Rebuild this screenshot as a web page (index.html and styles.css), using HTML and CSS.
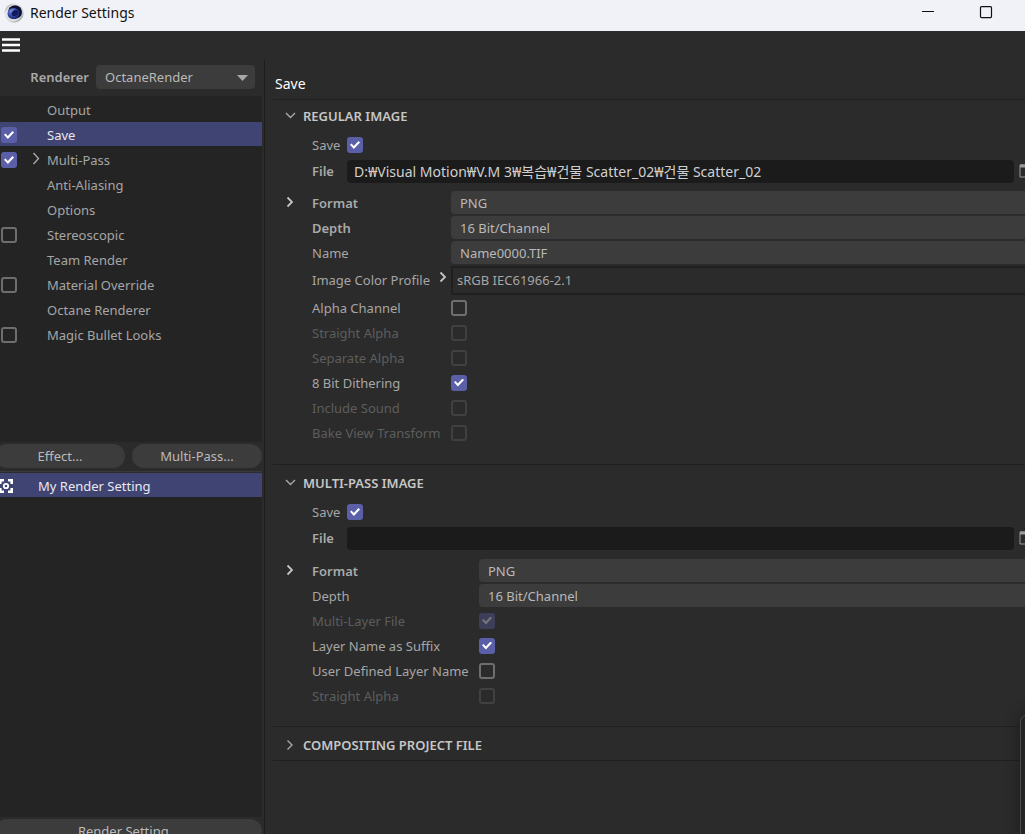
FILE: index.html
```html
<!DOCTYPE html>
<html lang="en">
<head>
<meta charset="utf-8">
<title>Render Settings</title>
<link rel="stylesheet" href="styles.css">
</head>
<body>
<div class="window">
  <header class="titlebar">
    <svg class="logo" width="20" height="20" viewBox="0 0 20 20" aria-hidden="true">
      <defs>
        <linearGradient id="rim" x1="0" y1="0" x2="1" y2="1"><stop offset="0" stop-color="#8b8c92"/><stop offset="0.3" stop-color="#e9e9ec"/><stop offset="0.7" stop-color="#c9cace"/><stop offset="1" stop-color="#85868c"/></linearGradient>
        <radialGradient id="ball" cx="0.35" cy="0.3" r="0.8"><stop offset="0" stop-color="#8095e0"/><stop offset="0.5" stop-color="#3448a8"/><stop offset="1" stop-color="#141c58"/></radialGradient>
      </defs>
      <circle cx="10" cy="10" r="9.7" fill="url(#rim)"/>
      <ellipse cx="11" cy="9" rx="7" ry="6.800" fill="#0c1030"/>
      <ellipse cx="9.500" cy="10.500" rx="6" ry="5.600" fill="url(#ball)"/>
      <path d="M7.500 10c1-2.500 4-3.500 6-2.500 1.500 2 .5 4.500-2 5.500-2.500.5-4.300-.8-4-3z" fill="#111a5c"/>
      <path d="M3 14c3 3.500 9 4 13 .5-2 4-10 5-13-.5z" fill="#f2f2f4"/>
    </svg>
    <h1 class="window-title">Render Settings</h1>
    <div class="window-controls">
      <button class="window-button" type="button" aria-label="Minimize"><svg width="14" height="14" viewBox="0 0 14 14"><path d="M1 5.500h12" stroke="#111" fill="none"/></svg></button>
      <button class="window-button" type="button" aria-label="Maximize"><svg width="14" height="14" viewBox="0 0 14 14"><rect x="1.500" y="0.600" width="11" height="11" rx="1" stroke="#111" stroke-width="1.200" fill="none"/></svg></button>
    </div>
  </header>
  <nav class="menubar">
    <button class="menu-button" type="button" aria-label="Menu"><svg width="19" height="14" viewBox="0 0 19 14"><path d="M1 1.500h18M1 7h18M1 12.500h18" stroke="#fff" stroke-width="2.600"/></svg></button>
  </nav>
  <div class="body">
    <aside class="sidebar">
      <div class="renderer">
        <label class="strong" for="renderer">Renderer</label>
        <span class="renderer-box">
          <select class="select renderer-select" id="renderer"><option>OctaneRender</option></select>
          <svg class="arrow" width="11" height="6" viewBox="0 0 11 6"><path d="M0 0h11L5.500 6z" fill="#a8a8a8"/></svg>
        </span>
      </div>
      <ul class="tree">
        <li class="tree-row"><span class="tree-label">Output</span></li>
        <li class="tree-row selected"><input class="check" type="checkbox" id="t-save" checked><label class="tree-label" for="t-save">Save</label></li>
        <li class="tree-row"><input class="check" type="checkbox" id="t-multi" checked><svg class="tree-chevron" width="9" height="13" viewBox="0 0 9 13"><path d="M1.500 1l5 5.500-5 5.500" class="stroke"/></svg><label class="tree-label" for="t-multi">Multi-Pass</label></li>
        <li class="tree-row"><span class="tree-label">Anti-Aliasing</span></li>
        <li class="tree-row"><span class="tree-label">Options</span></li>
        <li class="tree-row"><input class="check" type="checkbox" id="t-stereo"><label class="tree-label" for="t-stereo">Stereoscopic</label></li>
        <li class="tree-row"><span class="tree-label">Team Render</span></li>
        <li class="tree-row"><input class="check" type="checkbox" id="t-material"><label class="tree-label" for="t-material">Material Override</label></li>
        <li class="tree-row"><span class="tree-label">Octane Renderer</span></li>
        <li class="tree-row"><input class="check" type="checkbox" id="t-magic"><label class="tree-label" for="t-magic">Magic Bullet Looks</label></li>
      </ul>
      <div class="actions">
        <button class="pill pill-effect" type="button">Effect...</button>
        <button class="pill pill-multi" type="button">Multi-Pass...</button>
      </div>
      <ul class="presets">
        <li class="preset">
          <svg width="14" height="14" viewBox="0 0 14 14" aria-hidden="true"><path d="M1.300 5V1.300H5M9 1.300h3.700V5M12.700 9v3.700H9M5 12.700H1.300V9" stroke="#fff" stroke-width="2.600" fill="none"/><circle cx="7" cy="7" r="2.200" stroke="#fff" stroke-width="1.800" fill="none"/></svg>
          <span>My Render Setting</span>
        </li>
      </ul>
      <button class="pill pill-bottom" type="button">Render Setting...</button>
    </aside>
    <main class="main">
      <h2 class="page-title">Save</h2>
      <section class="section regular">
        <h3 class="section-title"><svg width="11" height="7" viewBox="0 0 11 7"><path d="M1 1l4.500 4.500L10 1" class="stroke"/></svg>REGULAR IMAGE</h3>
        <div class="line save-line"><label for="r-save">Save</label><input class="check" type="checkbox" id="r-save" checked></div>
        <div class="line file-line">
          <label class="strong" for="r-file">File</label>
          <input class="file" type="text" id="r-file" value="D:₩Visual Motion₩V.M 3₩복습₩건물 Scatter_02₩건물 Scatter_02">
          <button class="browse" type="button" aria-label="Browse"><svg width="16" height="14" viewBox="0 0 16 14"><path d="M1 1h14v12H1z" class="folder"/><path d="M1 2h14" class="folder folder-top"/></svg></button>
        </div>
        <div class="fields">
          <div class="field"><svg class="chevron" width="8" height="12" viewBox="0 0 8 12"><path d="M1.500 1.500L6 6l-4.500 4.500" class="stroke bright"/></svg><label class="strong" for="r-format">Format</label><select class="select" id="r-format"><option>PNG</option></select></div>
          <div class="field"><label class="strong" for="r-depth">Depth</label><select class="select" id="r-depth"><option>16 Bit/Channel</option></select></div>
          <div class="field"><label for="r-name">Name</label><select class="select" id="r-name"><option>Name0000.TIF</option></select></div>
          <div class="field profile"><label for="r-profile">Image Color Profile</label><svg class="profile-chevron" width="8" height="12" viewBox="0 0 8 12"><path d="M1.500 1.500L6 6l-4.500 4.500" class="stroke bright"/></svg><input class="profile-box" type="text" id="r-profile" value="sRGB IEC61966-2.1" readonly></div>
          <div class="field"><label for="r-alpha">Alpha Channel</label><input class="check" type="checkbox" id="r-alpha"></div>
          <div class="field off"><label for="r-straight">Straight Alpha</label><input class="check" type="checkbox" id="r-straight" disabled></div>
          <div class="field off"><label for="r-separate">Separate Alpha</label><input class="check" type="checkbox" id="r-separate" disabled></div>
          <div class="field"><label for="r-dither">8 Bit Dithering</label><input class="check" type="checkbox" id="r-dither" checked></div>
          <div class="field off"><label for="r-sound">Include Sound</label><input class="check" type="checkbox" id="r-sound" disabled></div>
          <div class="field off"><label for="r-bake">Bake View Transform</label><input class="check" type="checkbox" id="r-bake" disabled></div>
        </div>
      </section>
      <section class="section multipass">
        <h3 class="section-title"><svg width="11" height="7" viewBox="0 0 11 7"><path d="M1 1l4.500 4.500L10 1" class="stroke"/></svg>MULTI-PASS IMAGE</h3>
        <div class="line save-line"><label for="m-save">Save</label><input class="check" type="checkbox" id="m-save" checked></div>
        <div class="line file-line">
          <label class="strong" for="m-file">File</label>
          <input class="file" type="text" id="m-file">
          <button class="browse" type="button" aria-label="Browse"><svg width="16" height="14" viewBox="0 0 16 14"><path d="M1 1h14v12H1z" class="folder"/><path d="M1 2h14" class="folder folder-top"/></svg></button>
        </div>
        <div class="fields fields-wide">
          <div class="field"><svg class="chevron" width="8" height="12" viewBox="0 0 8 12"><path d="M1.500 1.500L6 6l-4.500 4.500" class="stroke bright"/></svg><label class="strong" for="m-format">Format</label><select class="select" id="m-format"><option>PNG</option></select></div>
          <div class="field"><label for="m-depth">Depth</label><select class="select" id="m-depth"><option>16 Bit/Channel</option></select></div>
          <div class="field off"><label for="m-layer">Multi-Layer File</label><input class="check" type="checkbox" id="m-layer" checked disabled></div>
          <div class="field"><label for="m-suffix">Layer Name as Suffix</label><input class="check" type="checkbox" id="m-suffix" checked></div>
          <div class="field"><label for="m-user">User Defined Layer Name</label><input class="check" type="checkbox" id="m-user"></div>
          <div class="field off"><label for="m-straight">Straight Alpha</label><input class="check" type="checkbox" id="m-straight" disabled></div>
        </div>
      </section>
      <section class="section compositing">
        <h3 class="section-title"><svg width="11" height="12" viewBox="0 0 11 12"><path d="M2.500 1.500L7 6l-4.500 4.500" class="stroke"/></svg>COMPOSITING PROJECT FILE</h3>
      </section>
    </main>
  </div>
  <div class="side-window"></div>
</div>
</body>
</html>
```
FILE: styles.css
```css
* { box-sizing: border-box; }

body {
  margin: 0;
  overflow: hidden;
  background: #2b2b2b;
  color: #a6a6a6;
  font: 13px/20px "Noto Sans", "Noto Sans CJK KR", sans-serif;
}

h1, h2, h3, ul { margin: 0; padding: 0; list-style: none; font-weight: 400; }
button, input, select { margin: 0; font: inherit; color: inherit; }
svg { display: block; flex: none; }

.window { display: flex; flex-direction: column; height: calc(100vh + 9px); }

.titlebar { display: flex; align-items: center; flex: none; height: 31px; padding: 0 10px 6px 4px; background: #f0f2f8; color: #111; }
.window-title { margin-left: 6px; font-size: 14px; }
.window-controls { display: flex; gap: 30px; margin-left: auto; padding-right: 15px; }
.window-button { width: 28px; height: 20px; padding: 0; border: 0; background: none; display: grid; place-items: center; }

.menubar { flex: none; height: 29px; padding: 7px 1px; }
.menu-button { display: block; padding: 0; border: 0; background: none; }

.body { display: flex; flex: 1; min-height: 0; }

.sidebar { display: flex; flex-direction: column; flex: none; width: 265px; padding-right: 2px; border-right: 1px solid #1d1d1d; }
.renderer { display: flex; align-items: center; justify-content: flex-end; gap: 7px; height: 36px; padding: 0 7px 2px 0; }
.renderer-box { position: relative; width: 159px; }
.arrow { position: absolute; right: 7px; top: 10px; pointer-events: none; }

.strong { font-weight: 600; color: #a9a9a9; }

.select {
  display: block;
  width: 100%;
  height: 23px;
  padding: 0 9px;
  border: 0;
  border-radius: 4px;
  background: #3c3c3c;
  color: #b9b9b9;
  appearance: none;
}
.renderer-select { height: 24px; }

.tree { height: 346px; padding-top: 1px; background: #242424; }
.tree-row, .preset { display: flex; align-items: center; height: 25px; padding-top: 1px; background-clip: padding-box; border-bottom: 1px solid transparent; }
.tree-row { position: relative; padding-left: 47px; }
.tree-row .check { position: absolute; left: 1px; top: 5px; }
.tree-chevron { position: absolute; left: 32px; top: 5px; }
.selected, .preset { background-color: #404473; color: #e8e8ee; }

.check {
  flex: none;
  display: grid;
  place-items: center;
  width: 16px;
  height: 16px;
  border: 2px solid #6e6e6e;
  border-radius: 3px;
  background: transparent;
  appearance: none;
}
.check:checked { border: 0; background: #5b5fa8; }
.check:checked::before { content: ""; width: 10px; height: 8px; background: #fff; clip-path: polygon(0 48%, 15% 30%, 38% 62%, 85% 0, 100% 18%, 39% 100%); }
.check:disabled { border-color: #404040; }
.check:disabled:checked { background: #3d3e58; }
.check:disabled:checked::before { background: #77777d; }

.actions { display: flex; gap: 7px; height: 30px; padding: 2px 0 3px; border-bottom: 1px solid #393939; }
.pill { height: 24px; padding: 0; border: 0; border-radius: 12px; background: #3c3c3c; color: #bababa; }
.pill-effect { flex: 1; margin-left: -5px; }
.pill-multi { flex: 1; }
.pill-bottom { flex: none; margin: 2px 0 0 -5px; }

.presets { flex: 1; margin-top: 1px; background: #242424; }
.preset { gap: 25px; }
.preset svg { margin-left: -1px; }

.main { flex: 1; min-width: 0; padding-left: 8px; }
.page-title { height: 39px; padding: 14px 2px 0; font-size: 14px; color: #fff; }

.section { border-top: 1px solid #1f1f1f; }
.section-title { display: flex; align-items: center; gap: 7px; height: 31px; padding-left: 12px; font-size: 13px; font-weight: 600; color: #c6c6c6; }
.regular { height: 365px; }
.multipass { height: 262px; padding-top: 2px; }
.compositing { height: 35px; padding-top: 2px; border-bottom: 1px solid #1f1f1f; }

.stroke { fill: none; stroke: #a8a8a8; stroke-width: 1.4; }
.bright { stroke: #c4c4c4; stroke-width: 1.8; }

.line { display: flex; align-items: center; padding-left: 39px; }
.line label { flex: none; width: 35px; }
.save-line { height: 28px; }
.file-line { height: 24px; }
.file { flex: 1; min-width: 0; height: 23px; padding: 0 7px; border: 0; border-radius: 4px; background: #1b1b1b; color: #d0d0d0; font-size: 14px; }
.browse { width: 16px; margin: 0 -10px 0 5px; padding: 0; border: 0; background: none; }
.folder { fill: none; stroke: #9b9b9b; }
.folder-top { stroke-width: 3; }

.fields { display: grid; grid-template-columns: 132px 1fr; column-gap: 7px; padding: 7px 0 0 39px; white-space: nowrap; }
.fields-wide { grid-template-columns: 160px 1fr; padding-top: 8px; }
.field { position: relative; display: grid; grid-column: 1 / 3; grid-template-columns: subgrid; align-items: center; height: 25px; }
.off { color: #5d5d5d; }
.chevron { position: absolute; left: -26px; top: 6px; }
.field .select { border-radius: 4px 0 0 4px; }
.profile { height: 30px; }
.profile-chevron { position: absolute; left: 127px; top: 6px; }
.profile-box { width: 100%; height: 29px; padding: 0 4px; border: 2px solid #202020; border-right: 0; background: #2b2b2b; color: #a6a6a6; }

.side-window { position: absolute; right: -20px; bottom: -9px; width: 25px; height: 129px; border: 1px solid #4b4b4b; border-radius: 8px 0 0 0; background: #242424; box-shadow: 0 0 14px #1c1c1c; }
```
